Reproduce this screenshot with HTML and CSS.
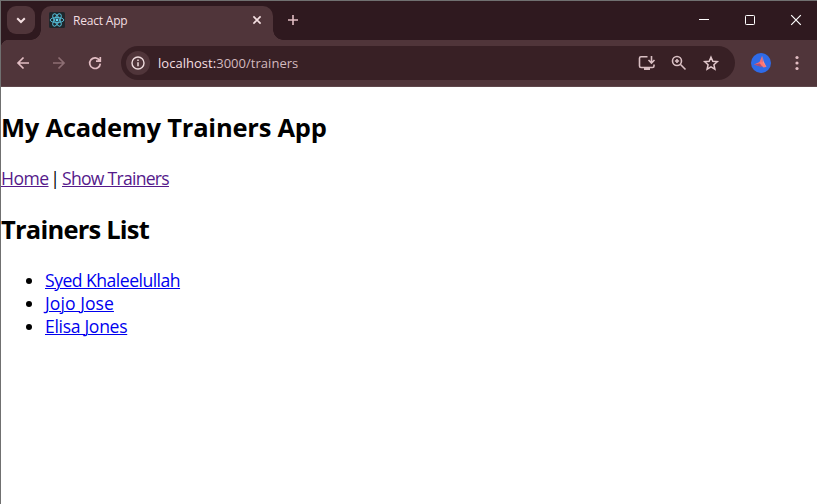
FILE: index.html
```html
<!DOCTYPE html>
<html lang="en">
<head>
<meta charset="utf-8">
<title>React App</title>
<link rel="stylesheet" href="styles.css">
</head>
<body>
<div class="window">
  <header class="tabstrip">
    <button class="tab-search" aria-label="Search tabs">
      <svg width="28" height="28" viewBox="0 0 28 28"><path d="M10.2 12.2 14 16l3.8-3.8" stroke="#f4dfe1" stroke-width="2" fill="none"/></svg>
    </button>
    <div class="tab">
      <svg class="favicon" width="16" height="16" viewBox="0 0 16 16"><rect width="16" height="16" rx="1.5" fill="#20262b"/><g fill="none" stroke="#53b9d3" stroke-width="1"><ellipse cx="8" cy="8" rx="6.8" ry="2.6"/><ellipse cx="8" cy="8" rx="6.8" ry="2.6" transform="rotate(60 8 8)"/><ellipse cx="8" cy="8" rx="6.8" ry="2.6" transform="rotate(120 8 8)"/></g><circle cx="8" cy="8" r="1.4" fill="#61dafb"/></svg>
      <span class="tab-title">React App</span>
      <svg class="tab-close" width="16" height="16" viewBox="0 0 16 16"><path d="m4.4 4.400 7.200 7.200m0-7.200-7.200 7.200" stroke="#f4dfe1" stroke-width="1.6"/></svg>
    </div>
    <svg class="new-tab" width="16" height="16" viewBox="0 0 16 16"><path d="M8 3v10M3 8h10" stroke="#e2bdc3" stroke-width="1.6"/></svg>
    <div class="controls">
      <svg width="46" height="38" viewBox="0 0 46 38"><path d="M18 18.5h10" stroke="#fff"/></svg>
      <svg width="46" height="38" viewBox="0 0 46 38"><rect x="18.5" y="14.5" width="9" height="9" rx=".8" fill="none" stroke="#fff"/></svg>
      <svg width="46" height="38" viewBox="0 0 46 38"><path d="m18.2 14.2 9.6 9.6m0-9.6-9.6 9.6" stroke="#fff" stroke-width="1.2"/></svg>
    </div>
  </header>
  <div class="toolbar">
    <nav class="nav">
      <svg width="16" height="16" viewBox="0 0 16 16"><path d="M14 8H3m5.500-5.500L3 8l5.500 5.500" stroke="#e2bdc3" stroke-width="1.700" fill="none"/></svg>
      <svg width="16" height="16" viewBox="0 0 16 16"><path d="M2 8h11M7.500 2.500 13 8l-5.500 5.500" stroke="#8d6e73" stroke-width="1.700" fill="none"/></svg>
      <svg width="16" height="16" viewBox="0 0 16 16"><path d="M12.600 5.500A5.300 5.300 0 1 0 13.300 8.600M13.300 2v4.200H9" stroke="#e2bdc3" stroke-width="1.700" fill="none"/></svg>
    </nav>
    <div class="address">
      <span class="info"><svg width="16" height="16" viewBox="0 0 16 16"><circle cx="8" cy="8" r="6" fill="none" stroke="#eedbdd" stroke-width="1.400"/><path d="M8 7.200v4M8 4.600v1.500" stroke="#eedbdd" stroke-width="1.500"/></svg></span>
      <span class="url"><span class="host">localhost:</span><span class="path">3000/trainers</span></span>
      <svg class="action" width="20" height="20" viewBox="0 0 20 20"><path d="M10.500 3.700H4a1.500 1.500 0 0 0-1.500 1.500V13A1.500 1.500 0 0 0 4 14.500h11.500A1.500 1.500 0 0 0 17 13v-1.500M14.500 3v7M11.500 7l3 3 3-3" fill="none" stroke="#d9bfc3" stroke-width="1.600"/><path d="M7 14h6v3H7z" fill="#d9bfc3"/></svg>
      <svg class="action" width="20" height="20" viewBox="0 0 20 20"><circle cx="8" cy="8" r="4.500" fill="none" stroke="#d9bfc3" stroke-width="1.600"/><path d="m11.300 11.300 5.200 5.200M8 5.900v4.200M5.900 8h4.200" stroke="#d9bfc3" stroke-width="1.600"/></svg>
      <svg class="action" width="20" height="20" viewBox="0 0 20 20"><path d="m10 4.200 1.800 4.100 4.500.4-3.400 3 1 4.400L10 13.800l-3.900 2.300 1-4.400-3.400-3 4.500-.4z" fill="none" stroke="#e2c8cc" stroke-width="1.500"/></svg>
    </div>
    <svg class="avatar" width="20" height="20" viewBox="0 0 20 20"><circle cx="10" cy="10" r="10" fill="#2e6be8"/><path d="m11.500 2.500 1 5.500 3 6-4-.5z" fill="#ff8b86"/><path d="m11 3-2.500 6L3 11.500l7 2 2-2z" fill="#f26b70"/><path d="m3 11.500 6-1 2.500 4z" fill="#a84e78"/><path d="m8.500 9.500 4 5 2.500-.5-3.500-5z" fill="#ff7772"/></svg>
    <svg class="menu" width="16" height="16" viewBox="0 0 16 16"><g fill="#e2bdc3"><circle cx="8" cy="2.500" r="1.600"/><circle cx="8" cy="8" r="1.600"/><circle cx="8" cy="13.500" r="1.600"/></g></svg>
  </div>
  <main class="page">
    <h2 class="app-title">My Academy Trainers App</h2>
    <p class="links"><a class="home" href="#">Home</a><span class="bar">|</span><a class="show" href="#">Show Trainers</a></p>
    <h2 class="list-title">Trainers List</h2>
    <ul class="trainers">
      <li><a class="syed" href="#">Syed Khaleelullah</a></li>
      <li><a class="jojo" href="#">Jojo Jose</a></li>
      <li><a class="elisa" href="#">Elisa Jones</a></li>
    </ul>
  </main>
</div>
</body>
</html>
```
FILE: styles.css
```css
* { box-sizing: border-box; }
body { margin: 0; overflow: hidden; background: #fff; font-family: "Open Sans", "Noto Sans", sans-serif; }
svg { display: block; flex: none; }
.window { height: 504px; border-top: 1px solid #707070; border-left: 1px solid #707070; }
.tabstrip { height: 39px; display: flex; background: #2f191f; }
.tab-search { width: 28px; height: 28px; margin: 5px 0 0 6px; padding: 0; border: 0; border-radius: 9px; background: #50353a; }
.tab { position: relative; width: 232px; height: 34px; margin: 5px 0 0 6px; padding: 0 8px; display: flex; align-items: center; background: #50353a; border-radius: 10px 10px 0 0; }
.tab::before, .tab::after { content: ""; position: absolute; bottom: 0; width: 10px; height: 10px; }
.tab::before { left: -10px; background: radial-gradient(circle at 0 0, transparent 9.500px, #50353a 10px); }
.tab::after { right: -10px; background: radial-gradient(circle at 100% 0, transparent 9.500px, #50353a 10px); }
.favicon { margin-bottom: 6px; }
.tab-title { margin: 0 auto 5px 8px; font-size: 12px; line-height: 16px; letter-spacing: -.2px; color: #f4dfe1; }
.tab-close { margin-bottom: 6px; }
.new-tab { margin: 11px auto 0 12px; }
.controls { display: flex; margin-right: -2px; }
.toolbar { height: 47px; display: flex; align-items: center; padding-bottom: 1px; border-bottom: 1px solid #5f474b; background: radial-gradient(circle at 8px 8px, #50353a 8px, #2f191f 8.500px) 0 0 / 8px 8px no-repeat, #50353a; }
.nav { display: flex; gap: 20px; margin-left: 14px; }
.address { width: 614px; height: 34px; margin-left: 18px; padding: 0 14px 0 5px; border-radius: 17px; display: flex; align-items: center; background: #382025; }
.info { width: 24px; height: 24px; border-radius: 50%; display: grid; place-items: center; background: #50353a; }
.url { margin: 0 auto 0 8px; font-size: 13px; line-height: 18px; letter-spacing: .03px; white-space: nowrap; }
.host { color: #f4dfe1; }
.path { color: #d3b9be; }
.action + .action { margin-left: 12px; }
.avatar { margin-left: 16px; }
.menu { margin-left: 18px; }
.page { padding-top: 23px; color: #000; font-size: 17.600px; line-height: 23px; }
h2 { margin: 0; font-size: 25.500px; line-height: 35px; font-weight: 700; white-space: nowrap; }
.app-title { letter-spacing: -.22px; }
.links { margin: 22px 0 0; height: 24px; display: flex; white-space: nowrap; }
.links a { color: #551a8b; }
.home { width: 47px; letter-spacing: -.55px; }
.bar { width: 14px; text-align: center; }
.show { letter-spacing: -.74px; }
.list-title { margin-top: 21px; letter-spacing: -.78px; }
.trainers { margin: 22px 0 0; padding-left: 44px; }
.trainers a { color: #0000ee; }
.syed { letter-spacing: -.52px; }
.jojo { letter-spacing: .05px; }
.elisa { letter-spacing: -.32px; }
a { text-underline-offset: 1px; text-decoration-thickness: 1px; }
```
